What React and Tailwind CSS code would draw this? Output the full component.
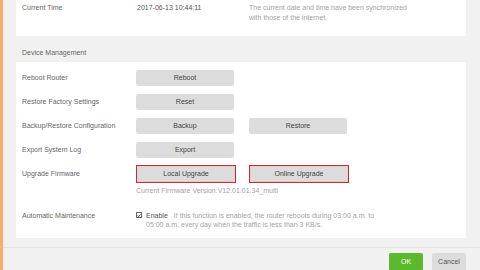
export default function App() {
  const rows = [
    { label: 'Reboot Router', buttons: ['Reboot'] },
    { label: 'Restore Factory Settings', buttons: ['Reset'] },
    { label: 'Backup/Restore Configuration', buttons: ['Backup', 'Restore'] },
    { label: 'Export System Log', buttons: ['Export'] },
  ];

  return (
    <div
      className="flex w-[480px] h-[270px] overflow-hidden bg-[#f1f1f1] text-[7px] text-[#666]"
      style={{ fontFamily: '"Liberation Sans", Arial, sans-serif' }}
    >
      <div className="w-[3px] shrink-0 bg-[#f4b06c]" />
      <div className="flex flex-col flex-1">
        {/* top card: system time */}
        <div className="ml-[13px] w-[450px] h-[36px] shrink-0 bg-white flex items-start pl-[6px] pt-[3px]">
          <div className="w-[115px] leading-[10px]">Current Time</div>
          <div className="w-[112px] leading-[10px] text-[#555]">2017-06-13 10:44:11</div>
          <div className="leading-[10px] text-[#a3a3a3]">
            The current date and time have been synchronized
            <br />
            with those of the internet.
          </div>
        </div>

        {/* section header */}
        <div className="h-[26px] shrink-0 pl-[19px] pt-[12px] leading-[10px]">Device Management</div>

        {/* device management card */}
        <div className="ml-[13px] w-[450px] h-[176px] shrink-0 bg-white pl-[6px] pt-[4px]">
          {rows.map((r) => (
            <div key={r.label} className="flex items-center h-[24px]">
              <div className="w-[114px]">{r.label}</div>
              <div className="flex gap-[15px]">
                {r.buttons.map((b) => (
                  <div
                    key={b}
                    className="w-[98px] h-[16px] rounded-[2px] bg-[#dcdcdc] flex items-center justify-center text-[#444]"
                  >
                    {b}
                  </div>
                ))}
              </div>
            </div>
          ))}
          <div className="flex items-center h-[24px]">
            <div className="w-[114px]">Upgrade Firmware</div>
            <div className="flex gap-[13px]">
              <div className="w-[100px] h-[18px] border border-[#b5353a] bg-[#dcdcdc] flex items-center justify-center text-[#444] shadow-[inset_0_0_0_1px_#f0c8c8]">
                Local Upgrade
              </div>
              <div className="w-[100px] h-[18px] border border-[#b5353a] bg-[#dcdcdc] flex items-center justify-center text-[#444] shadow-[inset_0_0_0_1px_#f0c8c8]">
                Online Upgrade
              </div>
            </div>
          </div>
          <div className="pl-[114px] leading-[10px] text-[#a3a3a3]">Current Firmware Version:V12.01.01.34_multi</div>
          <div className="flex mt-[15px] leading-[9px]">
            <div className="w-[114px]">Automatic Maintenance</div>
            <div className="flex items-start">
              <div className="w-[6px] h-[6px] mt-[1px] mr-[4px] border border-[#666] bg-white flex items-center justify-center">
                <svg viewBox="0 0 6 6" className="w-[5px] h-[5px]">
                  <path d="M0.8 3 L2.4 4.6 L5.2 1.2" stroke="#333" strokeWidth="1.3" fill="none" />
                </svg>
              </div>
              <div className="w-[236px]">
                <span className="text-[#555] mr-[6px]">Enable</span>
                <span className="text-[#a3a3a3]">
                  If this function is enabled, the router reboots during 03:00 a.m. to 05:00 a.m. every day when the traffic is less than 3 KB/s.
                </span>
              </div>
            </div>
          </div>
        </div>

        {/* footer */}
        <div className="mt-[9px] border-t border-[#e2e2e2] flex-1 bg-[#f1f1f1] flex justify-end pr-[14px] pt-[5px] gap-[9px]">
          <div className="w-[34px] h-[18px] rounded-[2px] bg-[#5cb82c] text-white flex items-center justify-center">OK</div>
          <div className="w-[34px] h-[18px] rounded-[2px] bg-[#dcdcdc] text-[#555] flex items-center justify-center">Cancel</div>
        </div>
      </div>
    </div>
  );
}
